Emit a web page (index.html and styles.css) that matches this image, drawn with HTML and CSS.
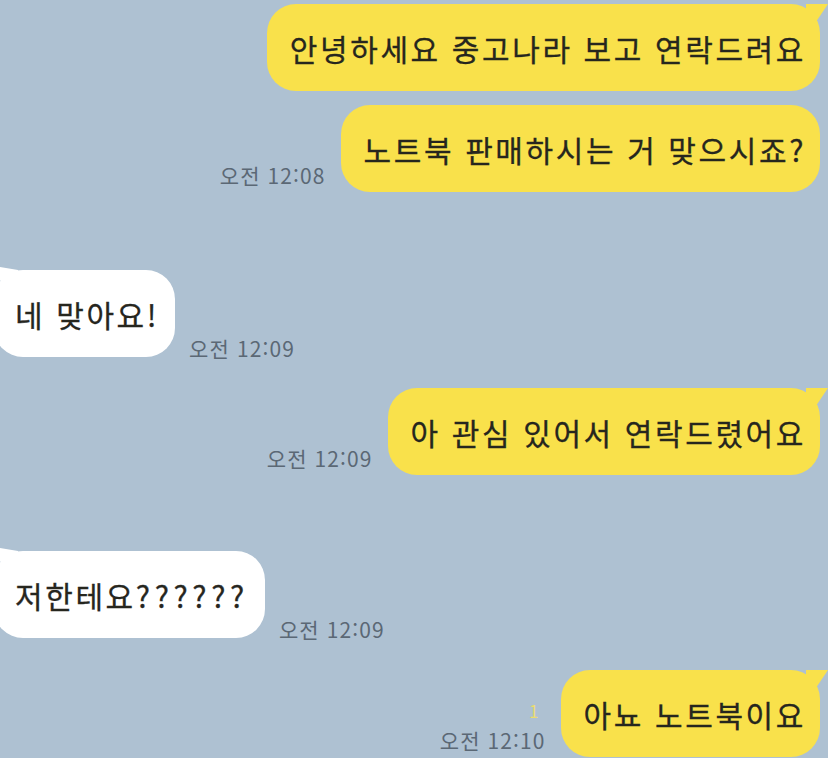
FILE: index.html
```html
<!DOCTYPE html>
<html lang="ko">
<head>
<meta charset="utf-8">
<link rel="stylesheet" href="styles.css">
</head>
<body>
<div class="chat">
  <div class="row me r1">
    <div class="bubble mine tail">안녕하세요 중고나라 보고 연락드려요</div>
  </div>
  <div class="row me r2">
    <div class="meta"><span class="time">오전 12:08</span></div>
    <div class="bubble mine">노트북 판매하시는 거 맞으시죠?</div>
  </div>
  <div class="row you r3">
    <div class="bubble theirs tail b3">네 맞아요!</div>
    <div class="meta"><span class="time">오전 12:09</span></div>
  </div>
  <div class="row me r4">
    <div class="meta"><span class="time">오전 12:09</span></div>
    <div class="bubble mine tail">아 관심 있어서 연락드렸어요</div>
  </div>
  <div class="row you r5">
    <div class="bubble theirs tail b5">저한테요<span class="q">??????</span></div>
    <div class="meta"><span class="time">오전 12:09</span></div>
  </div>
  <div class="row me r6">
    <div class="meta"><span class="unread">1</span><span class="time">오전 12:10</span></div>
    <div class="bubble mine tail">아뇨 노트북이요</div>
  </div>
</div>
</body>
</html>
```
FILE: styles.css
```css
html, body {
  margin: 0;
  padding: 0;
}
body {
  background: #aec1d2;
  width: 828px;
  height: 758px;
  overflow: hidden;
  font-family: "Noto Sans CJK KR", "Noto Sans", sans-serif;
  color: #26261e;
}
.chat {
  display: flex;
  flex-direction: column;
  padding-top: 4px;
}
.row {
  display: flex;
  align-items: flex-end;
}
.row.me {
  justify-content: flex-end;
  padding-right: 8px;
}
.row.you {
  justify-content: flex-start;
  margin-left: -6px;
}
.r2 { margin-top: 14px; }
.r3 { margin-top: 78px; }
.r4 { margin-top: 31px; }
.r5 { margin-top: 76px; }
.r6 { margin-top: 32px; }

.bubble {
  position: relative;
  height: 87px;
  box-sizing: border-box;
  display: flex;
  align-items: center;
  border-radius: 29px;
  font-size: 30px;
  font-weight: 400;
  -webkit-text-stroke: 0.3px #26261e;
  letter-spacing: 2.6px;
  white-space: nowrap;
}
.bubble .q {
  letter-spacing: 4.6px;
}
.bubble.mine {
  background: #f9e14b;
  padding: 0 14px 0 23px;
}
.bubble.theirs {
  background: #ffffff;
  padding: 0 16px 0 21px;
}
.bubble.mine.tail::after {
  content: "";
  position: absolute;
  top: 0;
  right: -8px;
  width: 22px;
  height: 18px;
  background: #f9e14b;
  clip-path: polygon(0 0, 100% 0, 45% 100%, 0 100%);
}
.bubble.theirs.tail::after {
  content: "";
  position: absolute;
  top: -4px;
  left: 0;
  width: 24px;
  height: 22px;
  background: #ffffff;
  clip-path: polygon(0 0, 100% 18%, 100% 100%, 40% 100%);
}
.meta {
  display: flex;
  flex-direction: column;
  align-items: flex-end;
  font-size: 21px;
  letter-spacing: 1.1px;
}
.row.me .meta {
  margin-right: 15px;
  margin-bottom: 4px;
}
.row.you .meta {
  margin-left: 14px;
  margin-bottom: -4px;
}
.time {
  color: #5b6875;
  line-height: 26px;
}
.unread {
  color: #ebdc70;
  font-size: 17px;
  line-height: 20px;
  margin-right: 6px;
  margin-bottom: 6px;
}
```
